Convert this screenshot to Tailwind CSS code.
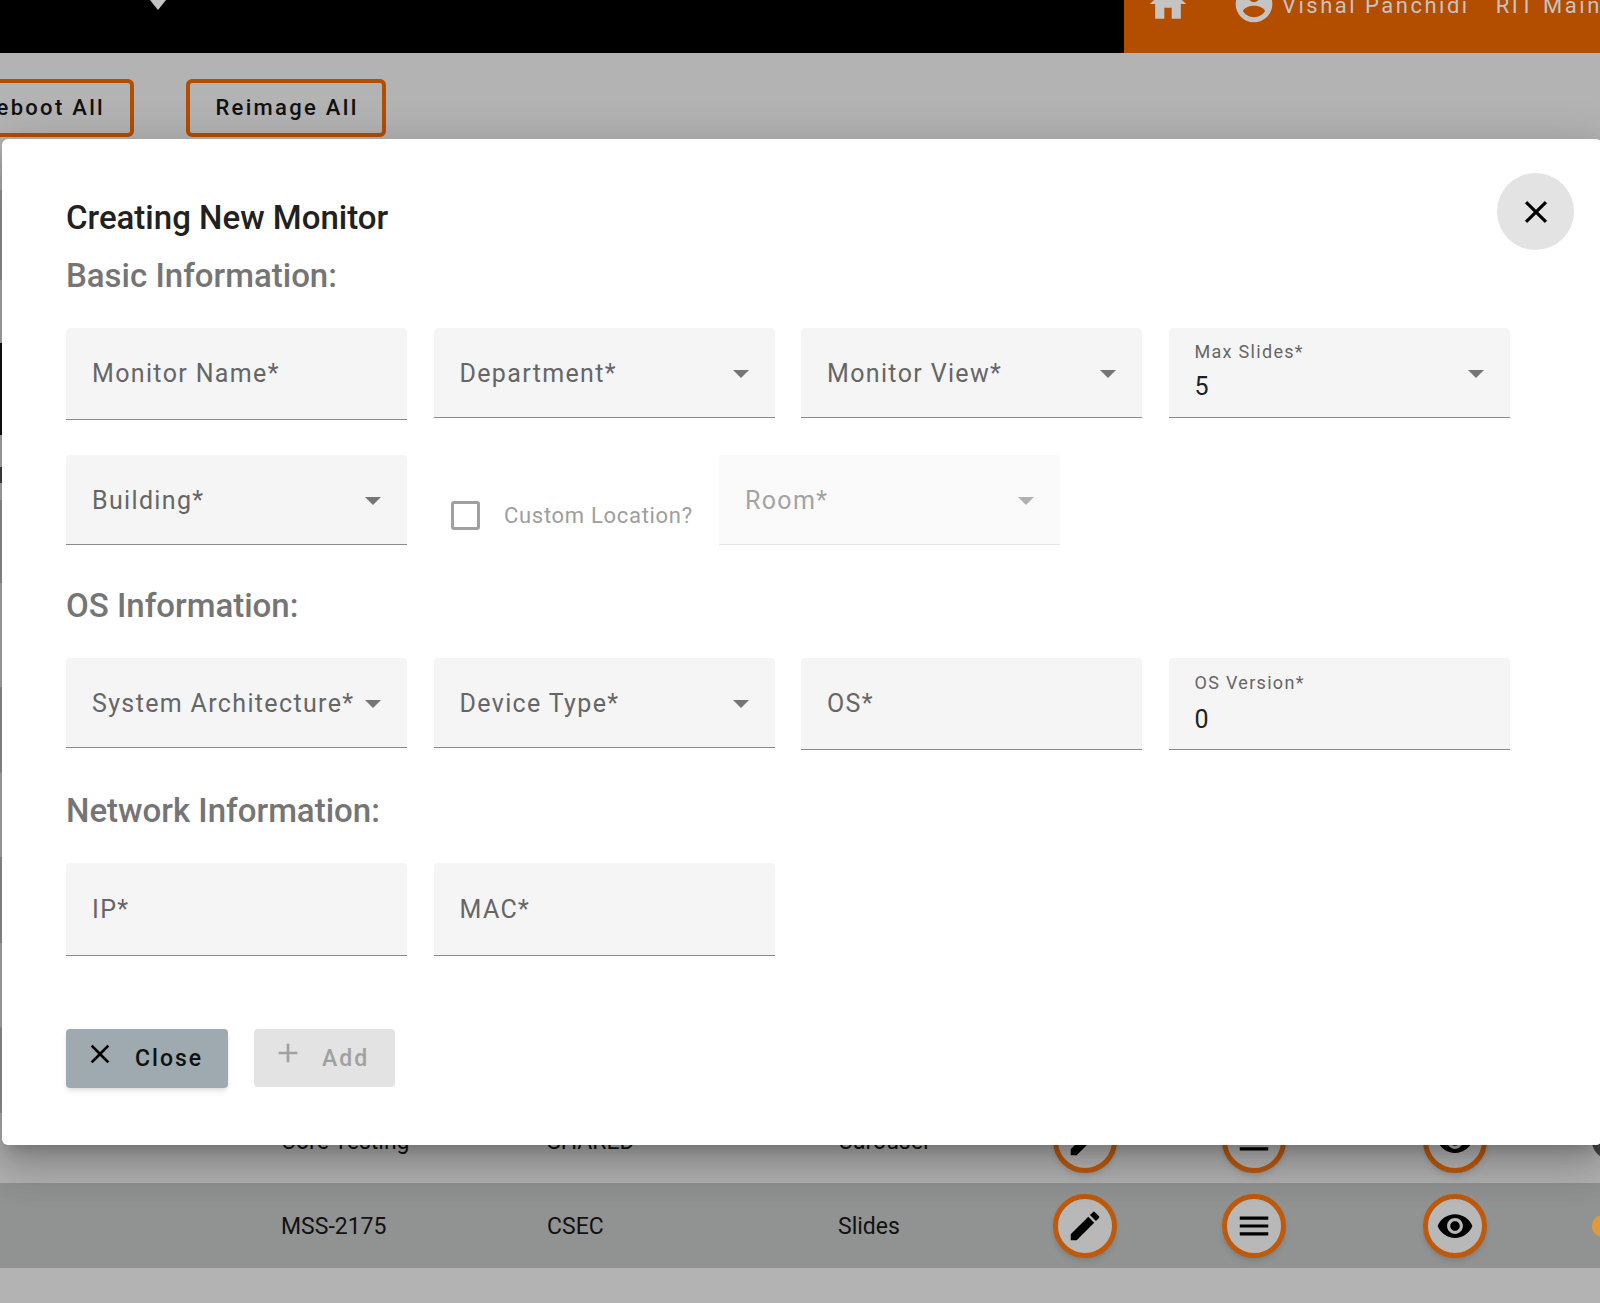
<!DOCTYPE html>
<html lang="en">
<head>
  <meta charset="UTF-8" />
  <title>Creating New Monitor</title>
  <script src="https://cdn.jsdelivr.net/npm/@tailwindcss/browser@4"></script>
</head>
<body class="font-['Roboto',sans-serif]">
<div class="relative w-[1600px] h-[1303px] overflow-hidden bg-[#b3b3b3]">

  <!-- top bar (page is scrolled, so its contents are cut off) -->
  <header class="flex h-[53px] bg-black overflow-hidden">
    <div class="shrink-0 w-[1124px] pl-[150px]">
      <div class="w-0 h-0 border-x-[8px] border-x-transparent border-t-[10px] border-t-[#c4c4c4]"></div>
    </div>
    <div class="flex-1 bg-[#b34d00] flex items-start pl-[22px] text-[#c4c4c4] text-[22px] tracking-[2.5px] whitespace-nowrap">
      <svg class="shrink-0 w-[44px] h-[44px] -mt-[18px]" viewBox="0 0 24 24" fill="currentColor"><path d="M10 20v-6h4v6h5v-8h3L12 3 2 12h3v8z"/></svg>
      <svg class="shrink-0 w-[44px] h-[44px] -mt-[18px] ml-[42px]" viewBox="0 0 24 24" fill="currentColor"><path d="M12 2C6.48 2 2 6.48 2 12s4.48 10 10 10 10-4.48 10-10S17.52 2 12 2zm0 3c1.66 0 3 1.34 3 3s-1.34 3-3 3-3-1.34-3-3 1.34-3 3-3zm0 14.2c-2.5 0-4.71-1.28-6-3.22.03-1.99 4-3.08 6-3.08 1.99 0 5.97 1.09 6 3.08-1.29 1.94-3.5 3.22-6 3.22z"/></svg>
      <span class="shrink-0 ml-[6px] -mt-[11px]">Vishal Panchidi</span>
      <span class="shrink-0 ml-[26px] -mt-[11px]">RIT Main</span>
    </div>
  </header>

  <!-- action buttons behind the dialog -->
  <div class="flex gap-[52px] pt-[26px] -ml-[66px] h-[1045px]">
    <button class="w-[200px] h-[58px] pb-[2px] border-[4px] border-[#b34d00] rounded-[6px] text-right pr-[25px] text-[#111] text-[22px] font-medium tracking-[2.3px] whitespace-nowrap">Reboot All</button>
    <button class="w-[200px] h-[58px] pb-[2px] pl-[2px] border-[4px] border-[#b34d00] rounded-[6px] text-[#111] text-[22px] font-medium tracking-[2.3px] whitespace-nowrap">Reimage All</button>
  </div>

  <!-- table rows behind the dialog -->
  <div class="flex items-center h-[85px] text-[#111] text-[23px]">
    <span class="shrink-0 ml-[281px] w-[266px] mt-[3px]">Core Testing</span>
    <span class="shrink-0 w-[291px] mt-[3px]">SHARED</span>
    <span class="shrink-0 w-[215px] mt-[3px]">Carousel</span>
    <div class="shrink-0 w-[64px] h-[64px] rounded-full border-[5px] border-[#bf5a0c] bg-[#b8b8b8] shadow-md flex items-center justify-center">
      <svg class="w-[38px] h-[38px]" viewBox="0 0 24 24"><path d="M3 17.25V21h3.75L17.81 9.94l-3.75-3.75L3 17.25zM20.71 7.04c.39-.39.39-1.02 0-1.41l-2.34-2.34c-.39-.39-1.02-.39-1.41 0l-1.83 1.83 3.75 3.75 1.83-1.83z"/></svg>
    </div>
    <div class="shrink-0 ml-[105px] w-[64px] h-[64px] rounded-full border-[5px] border-[#bf5a0c] bg-[#b8b8b8] shadow-md flex items-center justify-center">
      <svg class="w-[38px] h-[38px]" viewBox="0 0 24 24"><path d="M3 18h18v-2H3v2zm0-5h18v-2H3v2zm0-7v2h18V6H3z"/></svg>
    </div>
    <div class="shrink-0 ml-[137px] w-[64px] h-[64px] rounded-full border-[5px] border-[#bf5a0c] bg-[#b8b8b8] shadow-md flex items-center justify-center">
      <svg class="w-[38px] h-[38px]" viewBox="0 0 24 24"><path d="M12 4.5C7 4.5 2.73 7.61 1 12c1.73 4.39 6 7.5 11 7.5s9.27-3.11 11-7.5c-1.73-4.39-6-7.5-11-7.5zM12 17c-2.76 0-5-2.24-5-5s2.24-5 5-5 5 2.24 5 5-2.24 5-5 5zm0-8c-1.66 0-3 1.34-3 3s1.34 3 3 3 3-1.34 3-3-1.34-3-3-3z"/></svg>
    </div>
    <div class="shrink-0 ml-[105px] w-[36px] h-[36px] rounded-full bg-[#444]"></div>
  </div>
  <div class="flex items-center h-[85px] bg-[#919292] text-[#111] text-[23px]">
    <span class="shrink-0 ml-[281px] w-[266px] mt-[3px]">MSS-2175</span>
    <span class="shrink-0 w-[291px] mt-[3px]">CSEC</span>
    <span class="shrink-0 w-[215px] mt-[3px]">Slides</span>
    <div class="shrink-0 w-[64px] h-[64px] rounded-full border-[5px] border-[#bf5a0c] bg-[#b8b8b8] shadow-md flex items-center justify-center">
      <svg class="w-[38px] h-[38px]" viewBox="0 0 24 24"><path d="M3 17.25V21h3.75L17.81 9.94l-3.75-3.75L3 17.25zM20.71 7.04c.39-.39.39-1.02 0-1.41l-2.34-2.34c-.39-.39-1.02-.39-1.41 0l-1.83 1.83 3.75 3.75 1.83-1.83z"/></svg>
    </div>
    <div class="shrink-0 ml-[105px] w-[64px] h-[64px] rounded-full border-[5px] border-[#bf5a0c] bg-[#b8b8b8] shadow-md flex items-center justify-center">
      <svg class="w-[38px] h-[38px]" viewBox="0 0 24 24"><path d="M3 18h18v-2H3v2zm0-5h18v-2H3v2zm0-7v2h18V6H3z"/></svg>
    </div>
    <div class="shrink-0 ml-[137px] w-[64px] h-[64px] rounded-full border-[5px] border-[#bf5a0c] bg-[#b8b8b8] shadow-md flex items-center justify-center">
      <svg class="w-[38px] h-[38px]" viewBox="0 0 24 24"><path d="M12 4.5C7 4.5 2.73 7.61 1 12c1.73 4.39 6 7.5 11 7.5s9.27-3.11 11-7.5c-1.73-4.39-6-7.5-11-7.5zM12 17c-2.76 0-5-2.24-5-5s2.24-5 5-5 5 2.24 5 5-2.24 5-5 5zm0-8c-1.66 0-3 1.34-3 3s1.34 3 3 3 3-1.34 3-3-1.34-3-3-3z"/></svg>
    </div>
    <div class="shrink-0 ml-[105px] w-[22px] h-[22px] rounded-full bg-[#e09a3e]"></div>
  </div>

  <!-- sliver of the table that shows left of the dialog -->
  <div class="absolute left-0 top-[190px] w-[2px] flex flex-col">
    <div class="h-[90px] bg-[#999]"></div>
    <div class="h-[63px]"></div>
    <div class="h-[92px] bg-[#111]"></div>
    <div class="h-[32px]"></div>
    <div class="h-[16px] bg-[#444]"></div>
    <div class="h-[17px]"></div>
    <div class="h-[83px] bg-[#999]"></div>
    <div class="h-[104px]"></div>
    <div class="h-[86px] bg-[#999]"></div>
    <div class="h-[84px]"></div>
    <div class="h-[86px] bg-[#999]"></div>
    <div class="h-[84px]"></div>
    <div class="h-[86px] bg-[#999]"></div>
  </div>

  <!-- dialog -->
  <div class="absolute left-[2px] top-[139px] w-[1600px] h-[1006px] bg-white rounded-[6px] pl-[64px] pt-[58px] shadow-[0_11px_15px_-7px_rgba(0,0,0,.2),0_24px_38px_3px_rgba(0,0,0,.14),0_9px_46px_8px_rgba(0,0,0,.12)]">
    <button class="absolute left-[1495px] top-[34px] w-[77px] h-[77px] rounded-full bg-[#e3e3e3] flex items-center justify-center">
      <svg class="w-[38px] h-[38px]" viewBox="0 0 24 24"><path d="M19 6.41L17.59 5 12 10.59 6.41 5 5 6.41 10.59 12 5 17.59 6.41 19 12 13.41 17.59 19 19 17.59 13.41 12z"/></svg>
    </button>

    <h2 class="text-[33px] leading-[42px] font-medium text-[#212121]">Creating New Monitor</h2>
    <h3 class="mt-[16px] text-[33px] leading-[42px] font-medium text-[#757575]">Basic Information:</h3>

    <div class="mt-[31px] grid grid-cols-[repeat(4,341px)] gap-x-[26.5px] items-start text-[25px] tracking-[1.35px] text-[#666]">
      <div class="h-[92px] bg-[#f5f5f5] rounded-t-[4px] border-b border-b-[#8a8a8a] flex items-center px-[26px]">Monitor Name*</div>
      <div class="h-[90px] pt-[2px] bg-[#f5f5f5] rounded-t-[4px] border-b border-b-[#8a8a8a] flex items-center justify-between px-[26px]">Department*
        <span class="w-0 h-0 border-x-[8px] border-x-transparent border-t-[8px] border-t-[#757575]"></span></div>
      <div class="h-[90px] pt-[2px] bg-[#f5f5f5] rounded-t-[4px] border-b border-b-[#8a8a8a] flex items-center justify-between px-[26px]">Monitor View*
        <span class="w-0 h-0 border-x-[8px] border-x-transparent border-t-[8px] border-t-[#757575]"></span></div>
      <div class="h-[90px] pt-[2px] bg-[#f5f5f5] rounded-t-[4px] border-b border-b-[#8a8a8a] flex items-center justify-between px-[26px]">
        <div class="-mt-[4px]">
          <div class="text-[18px] leading-[22px] tracking-[1.3px]">Max Slides*</div>
          <div class="text-[25px] leading-[32px] tracking-[.5px] text-[#212121] mt-[8px]">5</div>
        </div>
        <span class="w-0 h-0 border-x-[8px] border-x-transparent border-t-[8px] border-t-[#757575]"></span>
      </div>
    </div>

    <div class="mt-[35px] flex items-start text-[25px] tracking-[1.35px] text-[#666]">
      <div class="w-[341px] h-[90px] pt-[2px] bg-[#f5f5f5] rounded-t-[4px] border-b border-b-[#8a8a8a] flex items-center justify-between px-[26px]">Building*
        <span class="w-0 h-0 border-x-[8px] border-x-transparent border-t-[8px] border-t-[#757575]"></span></div>
      <label class="w-[312px] h-[90px] flex items-end pb-[15px] pl-[44px] text-[22px] tracking-[.7px] text-[#9e9e9e]">
        <span class="w-[29px] h-[29px] border-[3px] border-[#a0a0a0] rounded-[3px] mr-[24px]"></span>
        <span class="whitespace-nowrap -mb-[2px]">Custom Location?</span>
      </label>
      <div class="w-[341px] h-[90px] pt-[2px] bg-[#fafafa] rounded-t-[4px] border-b border-b-[#e6e6e6] flex items-center justify-between px-[26px] text-[#a3a3a3]">Room*
        <span class="w-0 h-0 border-x-[8px] border-x-transparent border-t-[8px] border-t-[#b0b0b0]"></span></div>
    </div>

    <h3 class="mt-[40px] text-[33px] leading-[42px] font-medium text-[#757575]">OS Information:</h3>

    <div class="mt-[31px] grid grid-cols-[repeat(4,341px)] gap-x-[26.5px] items-start text-[25px] tracking-[1.35px] text-[#666]">
      <div class="h-[90px] pt-[2px] bg-[#f5f5f5] rounded-t-[4px] border-b border-b-[#8a8a8a] flex items-center justify-between px-[26px] whitespace-nowrap">System Architecture*
        <span class="w-0 h-0 border-x-[8px] border-x-transparent border-t-[8px] border-t-[#757575]"></span></div>
      <div class="h-[90px] pt-[2px] bg-[#f5f5f5] rounded-t-[4px] border-b border-b-[#8a8a8a] flex items-center justify-between px-[26px]">Device Type*
        <span class="w-0 h-0 border-x-[8px] border-x-transparent border-t-[8px] border-t-[#757575]"></span></div>
      <div class="h-[92px] bg-[#f5f5f5] rounded-t-[4px] border-b border-b-[#8a8a8a] flex items-center px-[26px]">OS*</div>
      <div class="h-[92px] bg-[#f5f5f5] rounded-t-[4px] border-b border-b-[#8a8a8a] flex items-center px-[26px]">
        <div>
          <div class="text-[18px] leading-[22px] tracking-[1.3px]">OS Version*</div>
          <div class="text-[25px] leading-[32px] tracking-[.5px] text-[#212121] mt-[10px]">0</div>
        </div>
      </div>
    </div>

    <h3 class="mt-[40px] text-[33px] leading-[42px] font-medium text-[#757575]">Network Information:</h3>

    <div class="mt-[31px] grid grid-cols-[repeat(4,341px)] gap-x-[26.5px] items-start text-[25px] tracking-[1.35px] text-[#666]">
      <div class="h-[93px] pt-[2px] bg-[#f5f5f5] rounded-t-[4px] border-b border-b-[#8a8a8a] flex items-center px-[26px]">IP*</div>
      <div class="h-[93px] pt-[2px] bg-[#f5f5f5] rounded-t-[4px] border-b border-b-[#8a8a8a] flex items-center px-[26px]">MAC*</div>
    </div>

    <div class="mt-[73px] flex items-start gap-[26px] text-[23px] font-medium tracking-[2px]">
      <button class="w-[162px] h-[59px] rounded-[4px] bg-[#9eaab0] text-[#111] shadow-md flex items-center pl-[18px]">
        <svg class="shrink-0 w-[32px] h-[32px] -mt-[10px]" viewBox="0 0 24 24"><path d="M19 6.41L17.59 5 12 10.59 6.41 5 5 6.41 10.59 12 5 17.59 6.41 19 12 13.41 17.59 19 19 17.59 13.41 12z"/></svg>
        <span class="ml-[19px] mt-[2px]">Close</span>
      </button>
      <button class="w-[141px] h-[58px] rounded-[4px] bg-[#e3e3e3] text-[#a0a0a0] flex items-center pl-[18px]">
        <svg class="shrink-0 w-[32px] h-[32px] -mt-[10px]" viewBox="0 0 24 24" fill="currentColor"><path d="M19 13h-6v6h-2v-6H5v-2h6V5h2v6h6v2z"/></svg>
        <span class="ml-[18px] mt-[2px]">Add</span>
      </button>
    </div>
  </div>
</div>
</body>
</html>
